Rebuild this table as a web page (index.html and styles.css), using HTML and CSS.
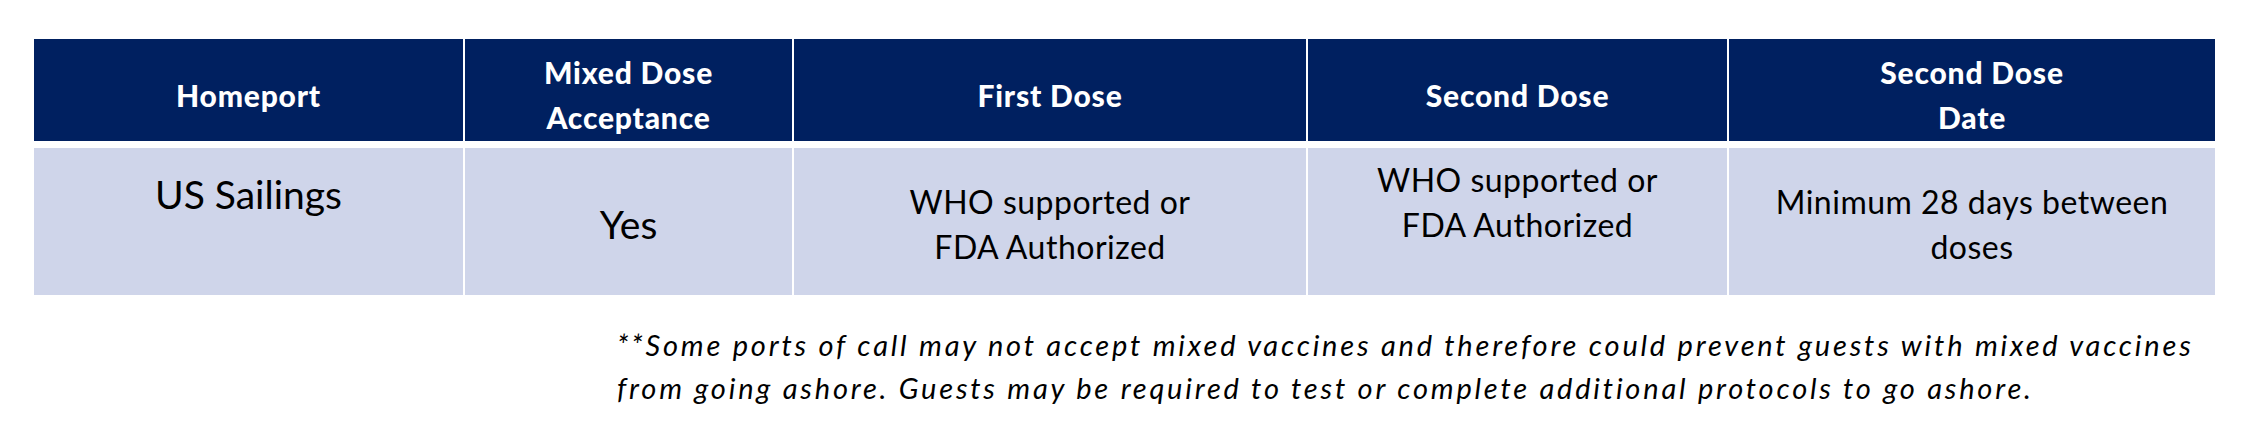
FILE: index.html
```html
<!DOCTYPE html>
<html lang="en">
<head>
<meta charset="utf-8">
<title>Mixed Dose Policy</title>
<link rel="stylesheet" href="styles.css">
</head>
<body>
<main class="page">
  <div class="table">
    <div class="th"><span>Homeport</span></div>
    <div class="th"><span>Mixed Dose<br>Acceptance</span></div>
    <div class="th"><span>First Dose</span></div>
    <div class="th"><span>Second Dose</span></div>
    <div class="th"><span>Second Dose<br>Date</span></div>

    <div class="td td-top td-calibri td-home">US Sailings</div>
    <div class="td td-center td-calibri">Yes</div>
    <div class="td td-center td-futura">WHO supported or<br>FDA Authorized</div>
    <div class="td td-top td-futura td-second">WHO supported or<br>FDA Authorized</div>
    <div class="td td-center td-futura">Minimum 28 days between<br>doses</div>
  </div>
  <p class="note">**Some ports of call may not accept mixed vaccines and therefore could prevent guests with mixed vaccines<br>from going ashore. Guests may be required to test or complete additional protocols to go ashore.</p>
</main>
</body>
</html>
```
FILE: styles.css
```css
html, body {
  margin: 0;
  padding: 0;
  background: #ffffff;
}

.page {
  padding: 39px 0 0 34px;
  width: 2250px;
  box-sizing: border-box;
}

.table {
  display: grid;
  grid-template-columns: 429px 327px 512px 419px 486px;
  grid-template-rows: 102px 147px;
  column-gap: 2px;
  row-gap: 7px;
  width: max-content;
}

.th {
  background: #002060;
  color: #ffffff;
  font-family: "Lato", "DejaVu Sans", sans-serif;
  font-weight: 900;
  font-size: 30px;
  line-height: 45px;
  text-align: center;
  display: flex;
  align-items: center;
  justify-content: center;
  padding-top: 10px;
  box-sizing: border-box;
  letter-spacing: 0.8px;
}

.td {
  background: #cfd5ea;
  color: #000000;
  text-align: center;
  display: flex;
  justify-content: center;
  box-sizing: border-box;
}

.td-center {
  align-items: center;
  padding-top: 5px;
}

.td-top {
  align-items: flex-start;
}

.td-calibri {
  font-family: "Lato", "Open Sans", sans-serif;
  font-size: 39px;
  line-height: 50px;
}

.td-futura {
  font-family: "Lato", "Open Sans", sans-serif;
  font-size: 32px;
  line-height: 45px;
  letter-spacing: 0.5px;
}

.td-home {
  padding-top: 21px;
}

.td-second {
  padding-top: 9px;
}

.note {
  margin: 28px 0 0 583px;
  font-family: "Lato", "Open Sans", sans-serif;
  font-style: italic;
  font-size: 29px;
  line-height: 43px;
  white-space: nowrap;
  color: #000000;
  letter-spacing: 2.8px;
}
```
